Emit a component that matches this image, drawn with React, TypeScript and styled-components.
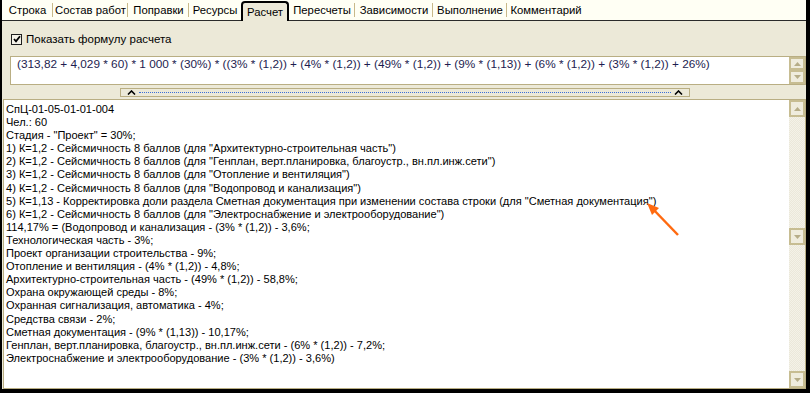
import React from "react";
import styled, { createGlobalStyle } from "styled-components";

const Global = createGlobalStyle`
  html, body { margin: 0; padding: 0; background: #000; }
  body { font-family: "Liberation Sans", Arial, sans-serif; }
`;

const Frame = styled.div`
  position: relative;
  width: 810px;
  height: 393px;
  box-sizing: border-box;
  background: #000;
  padding: 0 4px 4px 2px;
  display: flex;
  flex-direction: column;
`;

const TabBar = styled.div`
  height: 21px;
  flex: none;
  display: flex;
  align-items: stretch;
  background: #fffff4;
  box-sizing: border-box;
  border-bottom: 1px solid #2a2a2a;
  font-size: 11.3px;
  color: #000;
`;

const Tab = styled.div<{ $active?: boolean; $sep?: boolean; $w: number }>`
  width: ${(p) => p.$w}px;
  flex: none;
  box-sizing: border-box;
  display: flex;
  align-items: center;
  justify-content: center;
  position: relative;
  white-space: nowrap;
  ${(p) =>
    p.$active
      ? `
    background: #ece9d8;
    border: 2px solid #000;
    border-bottom: none;
    border-radius: 4px 4px 0 0;
    margin: 1px 0 -1px 0;
  `
      : ""}
  ${(p) =>
    p.$sep
      ? `
    &::after {
      content: "";
      position: absolute;
      right: 0;
      top: 3px;
      bottom: 3px;
      width: 1px;
      background: #c8b98a;
    }
  `
      : ""}
`;

const Panel = styled.div`
  flex: 1;
  background: #ece9d8;
  display: flex;
  flex-direction: column;
  min-height: 0;
`;

const CheckRow = styled.label`
  display: flex;
  align-items: center;
  gap: 4px;
  height: 14px;
  margin: 11px 0 0 9px;
  font-size: 11.5px;
  color: #000;
`;

const CheckBox = styled.span`
  width: 9px;
  height: 9px;
  border: 1px solid #1e1e1e;
  background: #f4f2e8;
  display: flex;
  align-items: center;
  justify-content: center;
`;

const FormulaBox = styled.div`
  margin: 10px 0 0 8px;
  height: 29px;
  box-sizing: border-box;
  border: 1px solid #b9ae83;
  background: #fff;
  display: flex;
`;

const FormulaText = styled.div`
  flex: 1;
  padding: 0 6px;
  font-size: 11.8px;
  line-height: 14px;
  color: #1d1d50;
  white-space: nowrap;
  overflow: hidden;
`;

const ScrollBar = styled.div`
  width: 16px;
  flex: none;
  display: flex;
  flex-direction: column;
  background: repeating-conic-gradient(#f4f2e8 0 25%, #ebe8da 0 50%) 0 0 / 2px 2px;
`;

const ScrollBtn = styled.div<{ $h?: number }>`
  height: ${(p) => p.$h ?? 13}px;
  box-sizing: border-box;
  border: 2px solid #c7bd92;
  background: #efecdd;
  display: flex;
  align-items: center;
  justify-content: center;
  flex: none;
`;

const Track = styled.div<{ $h?: number }>`
  ${(p) => (p.$h ? `height: ${p.$h}px; flex: none;` : "flex: 1;")}
`;

const Splitter = styled.div`
  margin: 3px 0 0 118px;
  width: 570px;
  height: 9px;
  box-sizing: border-box;
  border: 1px solid #b9ae83;
  display: flex;
  align-items: center;
  padding: 0 6px;
  gap: 3px;
`;

const Dots = styled.div`
  flex: 1;
  height: 0;
  border-top: 1px dotted #3c6fd6;
`;

const TextArea = styled.div`
  flex: 1;
  margin: 2px 0 0 1px;
  box-sizing: border-box;
  border: 1px solid #b9ae83;
  background: #fff;
  display: flex;
  min-height: 0;
`;

const Lines = styled.div`
  flex: 1;
  padding: 3px 2px;
  font-size: 11.05px;
  line-height: 13.1px;
  color: #000;
  white-space: nowrap;
  overflow: hidden;
`;

const Line = styled.div``;

const ArrowSvg = styled.svg`
  position: absolute;
  left: 640px;
  top: 196px;
  width: 50px;
  height: 50px;
  overflow: visible;
`;

const Up = () => (
  <svg width="7" height="4" viewBox="0 0 7 4">
    <path d="M3.5 0 L7 4 L0 4 Z" fill="#b6ad88" />
  </svg>
);
const Down = () => (
  <svg width="7" height="4" viewBox="0 0 7 4">
    <path d="M0 0 L7 0 L3.5 4 Z" fill="#b6ad88" />
  </svg>
);
const Caret = () => (
  <svg width="9" height="5" viewBox="0 0 9 5">
    <path d="M1 4.5 L4.5 1 L8 4.5" fill="none" stroke="#000" strokeWidth="1.6" />
  </svg>
);

const tabs: { t: string; w: number }[] = [
  { t: "Строка", w: 51 },
  { t: "Состав работ", w: 75 },
  { t: "Поправки", w: 61 },
  { t: "Ресурсы", w: 52 },
  { t: "Расчет", w: 48 },
  { t: "Пересчеты", w: 66 },
  { t: "Зависимости", w: 78 },
  { t: "Выполнение", w: 74 },
  { t: "Комментарий", w: 78 },
];

const lines = [
  "СпЦ-01-05-01-01-004",
  "Чел.: 60",
  'Стадия - "Проект" = 30%;',
  '1) К=1,2 - Сейсмичность 8 баллов (для "Архитектурно-строительная часть")',
  '2) К=1,2 - Сейсмичность 8 баллов (для "Генплан, верт.планировка, благоустр., вн.пл.инж.сети")',
  '3) К=1,2 - Сейсмичность 8 баллов (для "Отопление и вентиляция")',
  '4) К=1,2 - Сейсмичность 8 баллов (для "Водопровод и канализация")',
  '5) К=1,13 - Корректировка доли раздела Сметная документация при изменении состава строки (для "Сметная документация")',
  '6) К=1,2 - Сейсмичность 8 баллов (для "Электроснабжение и электрооборудование")',
  "114,17% = (Водопровод и канализация - (3% * (1,2)) - 3,6%;",
  "Технологическая часть - 3%;",
  "Проект организации строительства - 9%;",
  "Отопление и вентиляция - (4% * (1,2)) - 4,8%;",
  "Архитектурно-строительная часть - (49% * (1,2)) - 58,8%;",
  "Охрана окружающей среды - 8%;",
  "Охранная сигнализация, автоматика - 4%;",
  "Средства связи - 2%;",
  "Сметная документация - (9% * (1,13)) - 10,17%;",
  "Генплан, верт.планировка, благоустр., вн.пл.инж.сети - (6% * (1,2)) - 7,2%;",
  "Электроснабжение и электрооборудование - (3% * (1,2)) - 3,6%)",
];

export default function App() {
  return (
    <>
      <Global />
      <Frame>
        <TabBar>
          {tabs.map(({ t, w }, i) => (
            <Tab
              key={t}
              $w={w}
              $active={t === "Расчет"}
              $sep={t !== "Расчет" && t !== "Ресурсы" && i !== tabs.length - 1}
            >
              {t}
            </Tab>
          ))}
        </TabBar>
        <Panel>
          <CheckRow>
            <CheckBox>
              <svg width="8" height="8" viewBox="0 0 8 8">
                <path d="M1 4 L3 6.3 L7 1.2" fill="none" stroke="#000" strokeWidth="1.8" />
              </svg>
            </CheckBox>
            Показать формулу расчета
          </CheckRow>
          <FormulaBox>
            <FormulaText>
              (313,82 + 4,029 * 60) * 1 000 * (30%) * ((3% * (1,2)) + (4% * (1,2)) + (49% * (1,2)) + (9% * (1,13)) + (6% * (1,2)) + (3% * (1,2)) + 26%)
            </FormulaText>
            <ScrollBar>
              <ScrollBtn $h={13}>
                <Up />
              </ScrollBtn>
              <ScrollBtn $h={14}>
                <Down />
              </ScrollBtn>
            </ScrollBar>
          </FormulaBox>
          <Splitter>
            <Caret />
            <Dots />
            <Caret />
          </Splitter>
          <TextArea>
            <Lines>
              {lines.map((l) => (
                <Line key={l}>{l}</Line>
              ))}
            </Lines>
            <ScrollBar>
              <ScrollBtn $h={17}>
                <Up />
              </ScrollBtn>
              <Track $h={111} />
              <ScrollBtn $h={17}>
                <Down />
              </ScrollBtn>
              <Track />
              <ScrollBtn $h={17}>
                <Down />
              </ScrollBtn>
            </ScrollBar>
          </TextArea>
        </Panel>
        <ArrowSvg viewBox="0 0 50 50">
          <line x1="38" y1="39" x2="11" y2="11" stroke="#ff6a10" strokeWidth="2.5" />
          <path d="M7 7 L19 12 L12 19 Z" fill="#ff6a10" />
        </ArrowSvg>
      </Frame>
    </>
  );
}
